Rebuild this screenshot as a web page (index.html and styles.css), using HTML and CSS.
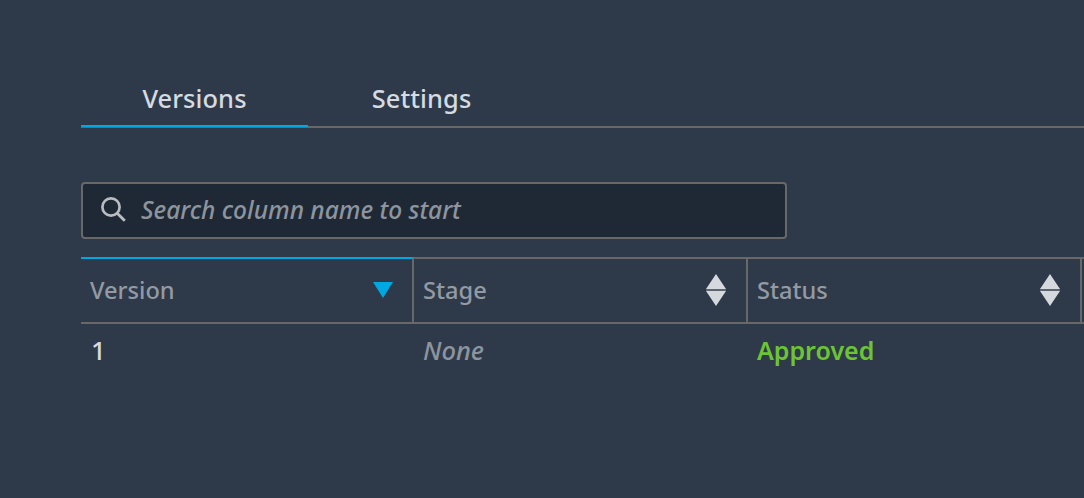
FILE: index.html
```html
<!DOCTYPE html>
<html lang="en">
<head>
<meta charset="utf-8">
<title>Versions</title>
<link rel="stylesheet" href="styles.css">
</head>
<body>
<main class="page">
  <nav class="tabs">
    <div class="tab tab-active">Versions</div>
    <div class="tab">Settings</div>
  </nav>
  <div class="search">
    <svg class="search-icon" width="25" height="25" viewBox="0 0 25 25" aria-hidden="true">
      <circle cx="10" cy="10" r="8.6" fill="none" stroke="#b9bdc2" stroke-width="2.7"/>
      <path d="M16.2 16.2l7.6 7.6" fill="none" stroke="#b9bdc2" stroke-width="2.8"/>
    </svg>
    <span class="search-text">Search column name to start</span>
  </div>
  <div class="table">
    <div class="th th-sorted">
      <span>Version</span>
      <svg class="sort" width="20" height="16" viewBox="0 0 20 16" aria-hidden="true"><path d="M0 0h20L10 16z" fill="#00a8e1"/></svg>
    </div>
    <div class="th">
      <span>Stage</span>
      <svg class="sort" width="20" height="32" viewBox="0 0 20 32" aria-hidden="true"><path d="M10 0l10 15H0zM0 17h20L10 32z" fill="#d5d8dc"/><path d="M0 16h20" stroke="#8b9098" stroke-width="1"/></svg>
    </div>
    <div class="th">
      <span>Status</span>
      <svg class="sort" width="20" height="32" viewBox="0 0 20 32" aria-hidden="true"><path d="M10 0l10 15H0zM0 17h20L10 32z" fill="#d5d8dc"/><path d="M0 16h20" stroke="#8b9098" stroke-width="1"/></svg>
    </div>
    <div class="th th-rest"></div>
    <div class="td td-num">1</div>
    <div class="td td-none">None</div>
    <div class="td td-ok">Approved</div>
  </div>
</main>
</body>
</html>
```
FILE: styles.css
```css
* { box-sizing: border-box; }
html, body { margin: 0; height: 100%; overflow: hidden; }
body {
  background: #2e3a4a;
  font-family: "Noto Sans", "Open Sans", sans-serif;
  font-size: 25px;
  font-weight: 500;
}
.page { padding: 71px 0 0 81px; width: 1084px; }
.tabs {
  display: flex;
  height: 57px;
  border-bottom: 2px solid #686868;
}
.tab {
  width: 227px;
  height: 56px;
  display: flex;
  align-items: center;
  justify-content: center;
  padding-bottom: 1px;
  color: #d5dbe1;
  font-size: 25.4px;
  letter-spacing: 0.1px;
  border-bottom: 2px solid transparent;
}
.tab-active { border-bottom-color: #00a8e1; }
.search {
  margin-top: 54px;
  width: 706px;
  height: 57px;
  display: flex;
  align-items: center;
  gap: 15px;
  padding: 0 0 2px 18px;
  background: #1f2935;
  border: 2px solid #686868;
  border-radius: 4px;
}
.search-text { font-style: italic; font-size: 24.5px; color: #8d949e; }
.table {
  margin-top: 18px;
  display: grid;
  grid-template-columns: 333px 334px 334px 40px;
}
.th {
  height: 67px;
  display: flex;
  align-items: center;
  justify-content: space-between;
  padding: 0 20px 2px 9px;
  color: #939aa3;
  font-size: 23.6px;
  border-top: 2px solid #686868;
  border-bottom: 2px solid #686868;
  border-right: 2px solid #686868;
}
.th-sorted { border-top-color: #00a8e1; padding-right: 19px; }
.th-rest { border-right: 0; }
.td { padding: 9px 9px 0 9px; height: 50px; line-height: 34px; }
.td-num { color: #d5dbe1; font-size: 26px; padding-left: 10px; }
.td-none { font-style: italic; color: #8d949e; font-size: 25.5px; }
.td-ok { color: #6cc434; font-weight: 600; grid-column: 3; }
```
